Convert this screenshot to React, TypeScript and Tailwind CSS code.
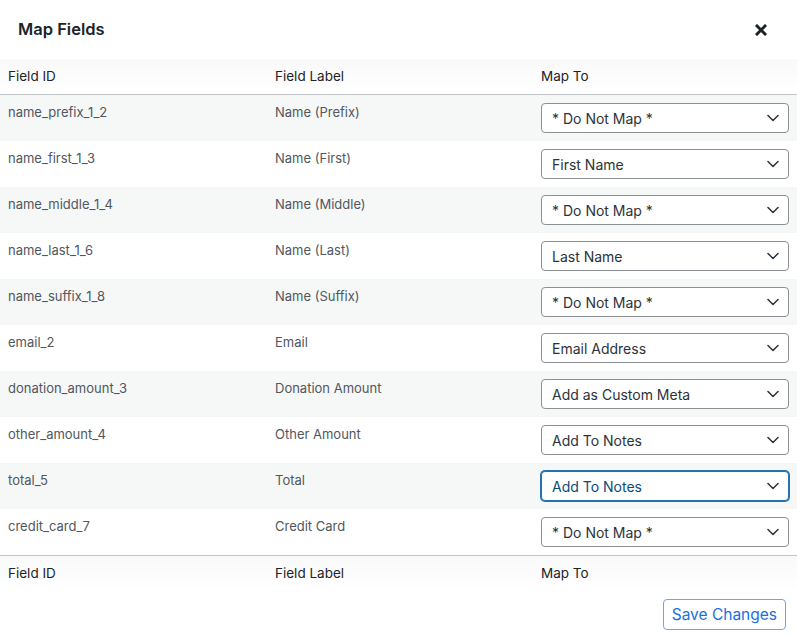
import React from "react";

const rows = [
  { id: "name_prefix_1_2", label: "Name (Prefix)", map: "* Do Not Map *" },
  { id: "name_first_1_3", label: "Name (First)", map: "First Name" },
  { id: "name_middle_1_4", label: "Name (Middle)", map: "* Do Not Map *" },
  { id: "name_last_1_6", label: "Name (Last)", map: "Last Name" },
  { id: "name_suffix_1_8", label: "Name (Suffix)", map: "* Do Not Map *" },
  { id: "email_2", label: "Email", map: "Email Address" },
  { id: "donation_amount_3", label: "Donation Amount", map: "Add as Custom Meta" },
  { id: "other_amount_4", label: "Other Amount", map: "Add To Notes" },
  { id: "total_5", label: "Total", map: "Add To Notes", focused: true },
  { id: "credit_card_7", label: "Credit Card", map: "* Do Not Map *" },
];

function Chevron() {
  return (
    <svg width="12" height="8" viewBox="0 0 12 8" fill="none">
      <path d="M1 1.5 L6 6.5 L11 1.5" stroke="#2c3338" strokeWidth="1.5" strokeLinecap="round" strokeLinejoin="round" />
    </svg>
  );
}

function FakeSelect({ value, focused }: { value: string; focused?: boolean }) {
  return (
    <div
      className={
        "flex h-[30px] items-center justify-between rounded-[4px] bg-white pl-[10px] pr-[9px] text-[14px] " +
        (focused
          ? "border border-[#2271b1] text-[#0a4b78] shadow-[0_0_0_1px_#2271b1]"
          : "border border-[#8c8f94] text-[#2c3338]")
      }
    >
      <span>{value}</span>
      <Chevron />
    </div>
  );
}

function HeadRow({ top }: { top?: boolean }) {
  return (
    <div
      className={
        "grid h-[36px] grid-cols-[267px_266px_1fr] items-center bg-gradient-to-b from-[#f9f9f9] to-white text-[13.5px] text-[#1d2327] " +
        (top ? "border-b border-[#c3c4c7]" : "border-t border-[#c3c4c7]")
      }
    >
      <div className="px-2">Field ID</div>
      <div className="px-2">Field Label</div>
      <div className="px-2">Map To</div>
    </div>
  );
}

export default function App() {
  return (
    <div className="h-[636px] w-[797px] overflow-hidden bg-white" style={{ fontFamily: "Inter, 'Liberation Sans', sans-serif" }}>
      <div className="flex h-[59px] items-center justify-between pl-[18px] pr-[30px]">
        <h1 className="text-[16.5px] font-semibold text-[#1d2327]">Map Fields</h1>
        <svg width="12" height="12" viewBox="0 0 12 12">
          <path d="M2 2 L10 10 M10 2 L2 10" stroke="#1d2327" strokeWidth="3" strokeLinecap="square" />
        </svg>
      </div>

      <HeadRow top />
      {rows.map((r, i) => (
        <div key={r.id} className={"grid h-[46px] grid-cols-[267px_266px_1fr] " + (i % 2 === 0 ? "bg-[#f6f7f7]" : "bg-white")}>
          <div className="px-2 pt-[8px] text-[13px] leading-[18px] text-[#50575e]">{r.id}</div>
          <div className="px-2 pt-[8px] text-[13px] leading-[18px] text-[#50575e]">{r.label}</div>
          <div className="px-2 pt-[8px]">
            <FakeSelect value={r.map} focused={r.focused} />
          </div>
        </div>
      ))}
      <HeadRow />

      <div className="flex justify-end pr-[11px] pt-[8px]">
        <button className="h-[31px] rounded-[4px] border border-[#6fa4e8] bg-white px-[8px] text-[15.5px] text-[#1a6fe0]">
          Save Changes
        </button>
      </div>
    </div>
  );
}
